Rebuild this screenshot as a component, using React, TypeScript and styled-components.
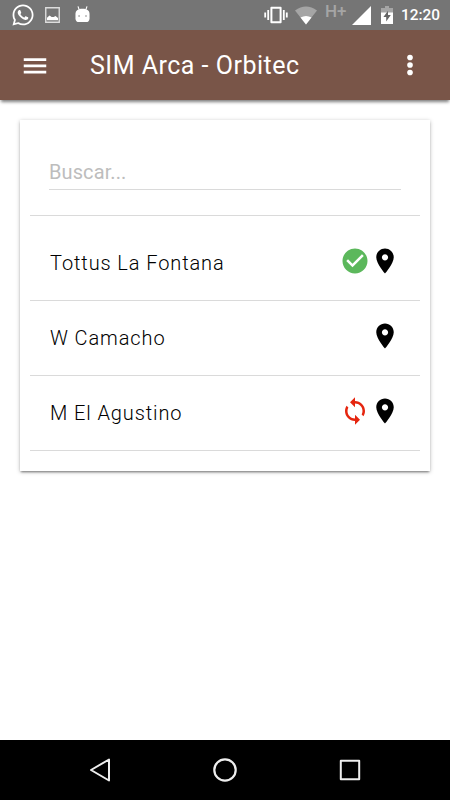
import React from 'react';
import styled, { createGlobalStyle } from 'styled-components';
import { FaWhatsapp } from 'react-icons/fa';

const GlobalStyle = createGlobalStyle`
  * { box-sizing: border-box; }
  body { margin: 0; background: #fff; font-family: Roboto, "Liberation Sans", sans-serif; }
  svg { display: block; flex: none; }
`;

const Screen = styled.div`
  width: 450px;
  height: 800px;
  display: flex;
  flex-direction: column;
  background: #fff;
  overflow: hidden;
`;

const StatusBar = styled.div`
  height: 30px;
  flex: none;
  display: flex;
  align-items: center;
  justify-content: space-between;
  padding: 0 10px 0 12px;
  background: #757575;
  color: #fff;
`;

const Notifications = styled.div`
  display: flex;
  align-items: center;
`;

const WhatsappIcon = styled(FaWhatsapp)`
  width: 22px;
  height: 24px;
`;

const PictureIcon = styled.svg`
  margin-left: 11px;
`;

const RobotIcon = styled.svg`
  margin-left: 15px;
  margin-top: -2px;
`;

const SystemIcons = styled.div`
  display: flex;
  align-items: center;
`;

const Network = styled.span`
  width: 21px;
  height: 30px;
  margin-left: 8px;
  color: #a5a5a5;
  font-size: 17px;
  font-weight: 500;
  line-height: 22px;
  white-space: nowrap;
`;

const WifiIcon = styled.svg`
  margin-left: 7px;
`;

const SignalIcon = styled.svg`
  margin-left: 6px;
`;

const BatteryIcon = styled.svg`
  margin-left: 10px;
`;

const Clock = styled.span`
  width: 39px;
  margin-left: 8px;
  font-size: 15.4px;
  font-weight: 500;
  line-height: 32px;
  white-space: nowrap;
`;

const AppBar = styled.header`
  height: 70px;
  flex: none;
  display: flex;
  align-items: center;
  padding: 0 25px 0 20px;
  background: #795548;
  color: #fff;
  box-shadow: 0 3px 3px -1px rgba(0, 0, 0, 0.5);
`;

const IconButton = styled.button`
  width: 30px;
  height: 30px;
  flex: none;
  padding: 0;
  border: 0;
  background: none;
  color: inherit;
`;

const Title = styled.h1`
  flex: 1;
  margin: 2px 0 0 40px;
  font-size: 25px;
  font-weight: 400;
  letter-spacing: 0.5px;
  line-height: 30px;
`;

const Card = styled.main`
  height: 351px;
  flex: none;
  margin: 20px 20px 0;
  padding: 0 10px;
  background: #fff;
  box-shadow: 0 1px 4px rgba(0, 0, 0, 0.28), 0 2px 2px -1px rgba(0, 0, 0, 0.4);
`;

const Search = styled.div`
  height: 96px;
  padding: 35px 19px 0;
  border-bottom: 1px solid #dadada;
`;

const SearchInput = styled.input`
  display: block;
  width: 100%;
  height: 35px;
  padding: 0;
  border: 0;
  border-bottom: 1px solid #dadada;
  outline: 0;
  background: none;
  color: #111;
  font: 400 20px Roboto, sans-serif;
  letter-spacing: 0.1px;
  &::placeholder { color: #bdbdbd; opacity: 1; }
`;

const List = styled.ul`
  margin: 0;
  padding: 10px 0 0;
  list-style: none;
`;

const Row = styled.li`
  height: 75px;
  display: flex;
  align-items: center;
  padding: 0 20px;
  border-bottom: 1px solid #dadada;
`;

const Place = styled.span`
  flex: 1;
  color: #000;
  font-size: 20px;
  font-weight: 350;
  letter-spacing: 0.9px;
  line-height: 30px;
`;

const Marker = styled.svg`
  width: 30px;
  height: 30px;
  margin-top: -4px;
`;

const NavBar = styled.nav`
  height: 60px;
  flex: none;
  display: flex;
  justify-content: space-between;
  align-items: center;
  margin-top: auto;
  padding: 0 85px;
  background: #000;
  color: #eee;
`;

const paths = {
  done: 'M12 2C6.48 2 2 6.48 2 12s4.48 10 10 10 10-4.48 10-10S17.52 2 12 2zm-2 15l-5-5 1.41-1.41L10 14.17l7.59-7.59L19 8l-9 9z',
  sync: 'M12 4V1L8 5l4 4V6c3.31 0 6 2.69 6 6 0 1.01-.25 1.97-.7 2.8l1.46 1.46C19.54 15.03 20 13.57 20 12c0-4.42-3.58-8-8-8zm0 14c-3.31 0-6-2.69-6-6 0-1.01.25-1.97.7-2.8L5.24 7.74C4.46 8.97 4 10.43 4 12c0 4.42 3.58 8 8 8v3l4-4-4-4v3z',
  pin: 'M12 2C8.13 2 5 5.13 5 9c0 5.25 7 13 7 13s7-7.75 7-13c0-3.87-3.13-7-7-7zm0 9.5c-1.38 0-2.5-1.12-2.5-2.5s1.12-2.5 2.5-2.5 2.5 1.12 2.5 2.5-1.12 2.5-2.5 2.5z',
};

type PlaceItem = { name: string; status?: 'done' | 'sync' };

const places: PlaceItem[] = [
  { name: 'Tottus La Fontana', status: 'done' },
  { name: 'W Camacho' },
  { name: 'M El Agustino', status: 'sync' },
];

const statusColors = { done: '#5cb85c', sync: '#e5250f' };

function PlaceRow({ name, status }: PlaceItem) {
  return (
    <Row>
      <Place>{name}</Place>
      {status && (
        <Marker viewBox="0 0 24 24" fill={statusColors[status]}>
          <path d={paths[status]} />
        </Marker>
      )}
      <Marker viewBox="0 0 24 24" fill="#000">
        <path d={paths.pin} />
      </Marker>
    </Row>
  );
}

export default function App() {
  return (
    <Screen>
      <GlobalStyle />
      <StatusBar>
        <Notifications>
          <WhatsappIcon />
          <PictureIcon width="15" height="16" viewBox="0 0 15 16">
            <path d="M.75.75h13.5v14.5H.75z" fill="none" stroke="#ddd" strokeWidth="1.4" />
            <path d="M2 13.2v-2.4L4.5 8.5l2.2 1.6h2L10.5 9l2.5 2v2.2z" fill="#fff" />
          </PictureIcon>
          <RobotIcon width="15" height="18" viewBox="0 0 16 18">
            <path d="M3.2.8L4.4 4.4M12.8.8L11.6 4.4" stroke="#fff" strokeWidth="1.2" />
            <path d="M.5 9C.5 5 3.6 3.4 8 3.4S15.5 5 15.5 9v4.4c0 3-1.6 4.2-3.6 4.2H4.1c-2 0-3.6-1.2-3.6-4.2z" fill="#fff" />
            <circle cx="4.3" cy="11" r=".8" fill="#757575" />
            <circle cx="11.7" cy="11" r=".8" fill="#757575" />
          </RobotIcon>
        </Notifications>
        <SystemIcons>
          <svg width="24" height="18" viewBox="0 0 24 18">
            <path d="M7.4 1.7h9.2v14.6H7.4z" fill="none" stroke="#fff" strokeWidth="2" strokeLinejoin="round" />
            <path d="M4.2 4v10M19.8 4v10M1.2 6.5v5M22.8 6.5v5" stroke="#fff" strokeWidth="1.8" />
          </svg>
          <WifiIcon width="22" height="19" viewBox="0 0 22 19">
            <path d="M0 4.5Q11-3.5 22 4.5L11 18.5z" fill="#a5a5a5" />
            <path d="M5.5 11.6Q11 8.4 16.5 11.6L11 18.5z" fill="#fff" />
          </WifiIcon>
          <Network>H+</Network>
          <SignalIcon width="19" height="19" viewBox="0 0 19 19">
            <path d="M19 0v19H0z" fill="#fff" />
          </SignalIcon>
          <BatteryIcon width="12" height="18" viewBox="0 0 12 18">
            <path d="M4 0h4v2h4v5H0V2h4z" fill="#a5a5a5" />
            <path d="M0 6.5h12V18H0z" fill="#fff" />
            <path d="M7 4.8L2.4 11h2.8v4.5L9.8 9H7z" fill="#666" />
          </BatteryIcon>
          <Clock>12:20</Clock>
        </SystemIcons>
      </StatusBar>
      <AppBar>
        <IconButton aria-label="Menu">
          <svg width="30" height="30" viewBox="0 0 24 24" fill="currentColor">
            <path d="M3 18.8h18v-2.2H3zm0-5h18v-2.2H3zm0-7.2v2.2h18V6.6z" />
          </svg>
        </IconButton>
        <Title>SIM Arca - Orbitec</Title>
        <IconButton aria-label="Options">
          <svg width="30" height="30" viewBox="0 0 24 24" fill="currentColor">
            <circle cx="12" cy="6" r="2.25" />
            <circle cx="12" cy="12" r="2.25" />
            <circle cx="12" cy="18" r="2.25" />
          </svg>
        </IconButton>
      </AppBar>
      <Card>
        <Search>
          <SearchInput placeholder="Buscar..." />
        </Search>
        <List>
          {places.map((place) => (
            <PlaceRow key={place.name} {...place} />
          ))}
        </List>
      </Card>
      <NavBar>
        <svg width="30" height="30" viewBox="0 0 30 30" fill="none" stroke="currentColor" strokeWidth="2" strokeLinejoin="round">
          <path d="M24 4.5v21L6 15z" />
        </svg>
        <svg width="30" height="30" viewBox="0 0 30 30" fill="none" stroke="currentColor" strokeWidth="2.2">
          <circle cx="15" cy="15" r="10.7" />
        </svg>
        <svg width="30" height="30" viewBox="0 0 30 30" fill="none" stroke="currentColor" strokeWidth="2" strokeLinejoin="round">
          <path d="M5.8 5.8h18.4v18.4H5.8z" />
        </svg>
      </NavBar>
    </Screen>
  );
}
